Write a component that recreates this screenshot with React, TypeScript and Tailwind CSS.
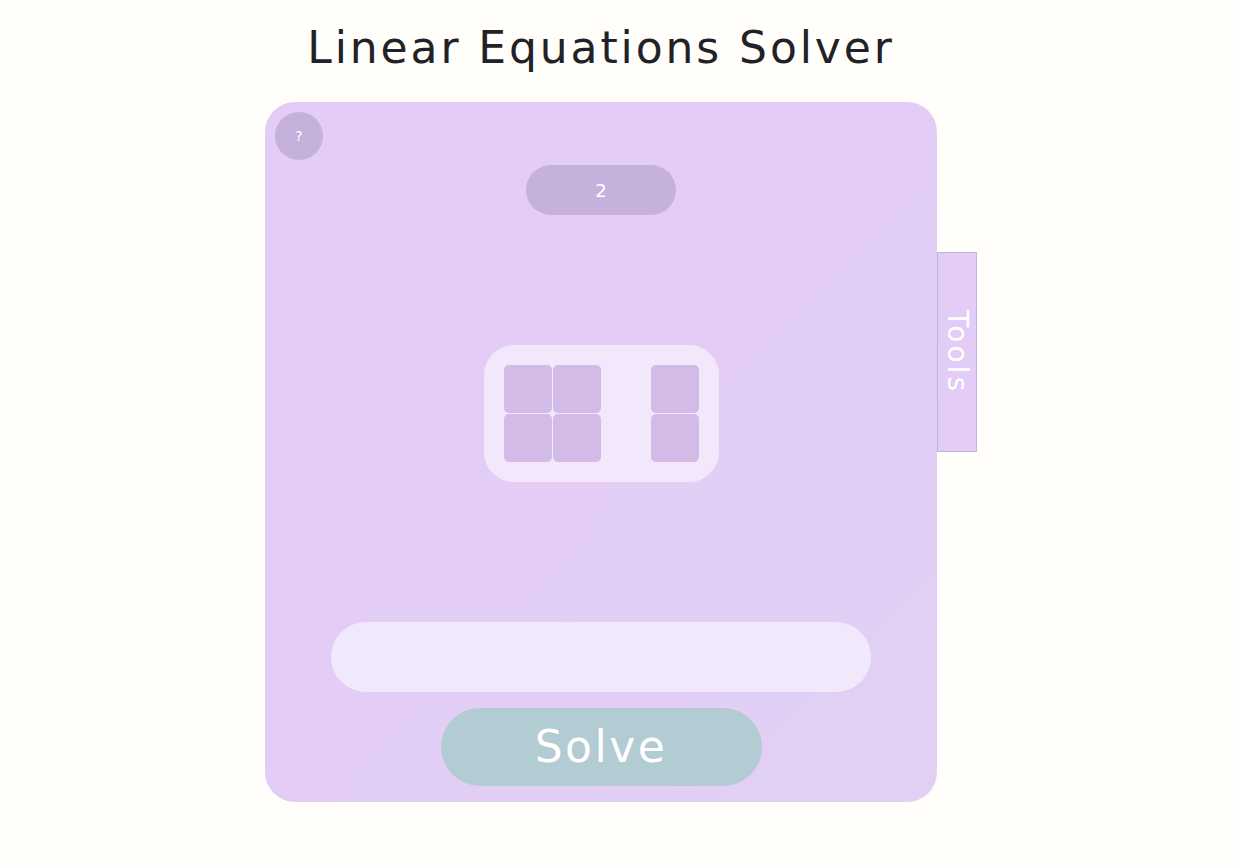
export default function App() {
  const font = { fontFamily: '"DejaVu Sans", "Noto Sans", sans-serif' };
  return (
    <div className="min-h-[866px] w-full bg-[#fffefb]" style={font}>
      <div className="flex justify-center pl-[9px]">
        <div className="flex flex-col items-start">
          <h1 className="w-[672px] pt-[20px] text-center text-[44px] leading-[56px] font-normal tracking-[2.9px] text-[#222226]">
            Linear Equations Solver
          </h1>
          <div className="mt-[26px] flex items-start">
            <Card />
            <div className="mt-[150px] flex h-[200px] w-[40px] items-center justify-center border border-[#c6b0df] bg-[#e3cdf6]">
              <span className="text-[28px] leading-none tracking-[3px] text-white [writing-mode:vertical-rl]">
                Tools
              </span>
            </div>
          </div>
        </div>
      </div>
    </div>
  );
}

function Card() {
  return (
    <div className="relative flex h-[700px] w-[672px] flex-col items-center rounded-[30px] bg-gradient-to-br from-[#e3cdf6] via-[#e3cdf6] to-[#e1d0f4] pt-[63px]">
      <button className="absolute top-[10px] left-[10px] flex h-[48px] w-[48px] items-center justify-center rounded-full bg-[#c5b1dc] text-[14px] text-white">
        ?
      </button>
      <div className="flex h-[50px] w-[150px] items-center justify-center rounded-full bg-[#c5b1dc] text-[18px] text-white">
        2
      </div>
      <Matrix />
      <div className="mt-[140px] h-[70px] w-[540px] rounded-full bg-[#f2e8fb]" />
      <button className="mt-[16px] flex h-[78px] w-[321px] items-center justify-center rounded-full bg-[#b3cbd3] text-[44px] tracking-[2.5px] text-white">
        Solve
      </button>
    </div>
  );
}

function Cell() {
  return <div className="h-[48px] w-[48px] rounded-[5px] bg-[#d2bbe6]" />;
}

function Matrix() {
  return (
    <div className="mt-[130px] flex rounded-[30px] bg-[#f3e8fb] p-[20px]">
      <div className="grid grid-cols-2 gap-[1px]">
        <Cell />
        <Cell />
        <Cell />
        <Cell />
      </div>
      <div className="ml-[50px] grid grid-cols-1 gap-[1px]">
        <Cell />
        <Cell />
      </div>
    </div>
  );
}
